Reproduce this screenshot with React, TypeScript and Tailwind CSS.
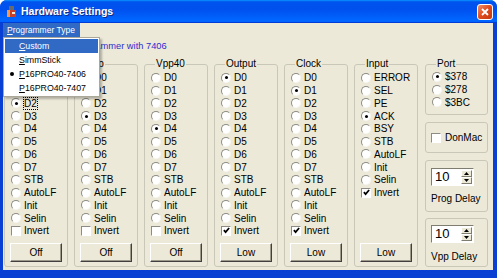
import React from 'react';

const BITS = ['D0', 'D1', 'D2', 'D3', 'D4', 'D5', 'D6', 'D7', 'STB', 'AutoLF', 'Init', 'Selin'];

const GROUPS = [
  { title: 'Vcc', on: 'D2', focus: true, invert: false, btn: 'Off' },
  { title: 'Vpp', on: 'D3', invert: false, btn: 'Off' },
  { title: 'Vpp40', on: 'D4', invert: false, btn: 'Off' },
  { title: 'Output', on: 'D0', invert: true, btn: 'Low' },
  { title: 'Clock', on: 'D1', invert: true, btn: 'Low' },
];

const INPUTS = ['ERROR', 'SEL', 'PE', 'ACK', 'BSY', 'STB', 'AutoLF', 'Init', 'Selin'];

function Radio({ label, on, focus }: { label: string; on?: boolean; focus?: boolean }) {
  return (
    <div className="flex items-center h-[12.75px]">
      <span className="w-[10px] h-[10px] shrink-0 rounded-full bg-white border border-t-[#8c8c84] border-l-[#8c8c84] border-r-[#f6f5f0] border-b-[#f6f5f0] flex items-center justify-center">
        {on && <span className="w-[3px] h-[3px] rounded-full bg-black" />}
      </span>
      <span className={`ml-[3px] text-[10px] leading-[11px] ${focus ? 'outline-1 outline-dotted outline-black' : ''}`}>
        {label}
      </span>
    </div>
  );
}

function Check({ on }: { on?: boolean }) {
  return (
    <span className="w-[10px] h-[10px] shrink-0 bg-white border border-t-[#8c8c84] border-l-[#8c8c84] border-r-white border-b-white flex items-center justify-center">
      {on && (
        <svg viewBox="0 0 8 8" className="w-[7px] h-[7px]">
          <path d="M1 3.5 L3 5.8 L7 1.2" stroke="#000" strokeWidth="2" fill="none" />
        </svg>
      )}
    </span>
  );
}

function CheckRow({ label, on }: { label: string; on?: boolean }) {
  return (
    <div className="flex items-center h-[12.75px]">
      <Check on={on} />
      <span className="ml-[3px] text-[10px] leading-[11px]">{label}</span>
    </div>
  );
}

function Button({ label }: { label: string }) {
  return (
    <div className="mt-auto mx-[5px] mb-[4px] h-[19px] flex items-center justify-center bg-[#ece9d8] border border-t-white border-l-white border-r-[#404040] border-b-[#404040] shadow-[inset_-1px_-1px_#9d9a8c] text-[10px]">
      {label}
    </div>
  );
}

function Spin({ value }: { value: string }) {
  return (
    <div className="w-[43px] h-[18px] bg-white border border-t-[#7f7d70] border-l-[#7f7d70] border-r-white border-b-white flex">
      <span className="flex-1 pl-[3px] text-[13px] leading-[16px]">{value}</span>
      <div className="w-[11px] mr-[1px] my-[1px] flex flex-col">
        <div className="flex-1 flex items-center justify-center bg-[#ece9d8] border border-t-white border-l-white border-r-[#7f7d70] border-b-[#7f7d70]">
          <svg viewBox="0 0 5 3" className="w-[5px] h-[3px]"><path d="M0 3 L2.5 0 L5 3 Z" fill="#000" /></svg>
        </div>
        <div className="flex-1 flex items-center justify-center bg-[#ece9d8] border border-t-white border-l-white border-r-[#7f7d70] border-b-[#7f7d70]">
          <svg viewBox="0 0 5 3" className="w-[5px] h-[3px]"><path d="M0 0 L2.5 3 L5 0 Z" fill="#000" /></svg>
        </div>
      </div>
    </div>
  );
}

export default function App() {
  return (
    <div className="w-[497px] h-[278px] bg-white font-['Liberation_Sans',Arial,sans-serif] text-black">
      <div className="relative w-full h-full flex flex-col bg-[#0a3fd4] rounded-t-[7px] overflow-hidden">
        {/* Title bar */}
        <div className="h-[23px] shrink-0 flex items-center pl-[5px] pr-[4px] bg-[linear-gradient(180deg,#0997ff,#0053ee_8%,#0050ee_40%,#06f_88%,#06f_93%,#005bff_95%,#003dd7_96%,#003dd7)]">
          <svg viewBox="0 0 13 13" className="w-[13px] h-[13px]">
            <path d="M4 1 L9 1 L9 5 L4 5 Z" fill="#6a6a6a" />
            <path d="M2 5 L11 5 L11 12 L2 12 Z" fill="#c8402a" />
            <path d="M2 5 L5 5 L5 12 L2 12 Z" fill="#f09a50" />
            <rect x="7" y="7" width="3" height="2" fill="#f4e8d0" />
          </svg>
          <span className="ml-[3px] text-[10.5px] font-bold text-white [text-shadow:1px_1px_#0a2a8a]">Hardware Settings</span>
          <div className="ml-auto w-[16px] h-[16px] rounded-[3px] border border-white bg-[linear-gradient(135deg,#f0906a,#e04a1c_50%,#c23a10)] flex items-center justify-center">
            <svg viewBox="0 0 8 8" className="w-[8px] h-[8px]">
              <path d="M1 1 L7 7 M7 1 L1 7" stroke="#fff" strokeWidth="1.8" />
            </svg>
          </div>
        </div>

        {/* Client area */}
        <div className="flex-1 ml-[3px] mr-[4px] mb-[8px] bg-[#ece9d8] flex flex-col">
          <div className="h-[14px] flex">
            <div className="w-[77px] bg-[#316ac5] text-white text-[8.5px] leading-[14px] pl-[4px]">
              <span className="underline">P</span>rogrammer Type
            </div>
          </div>
          <div className="h-[21px] pt-[3px] pl-[20px] text-[9.3px] leading-[12px] text-[#2c2cd0]">
            P16PRO40 Programmer with 7406
          </div>

          <div className="h-[209px] flex gap-[6px] pl-[1px]">
            {GROUPS.map(g => (
              <fieldset key={g.title} className="w-[64px] border border-[#c9c8b8] rounded-[3px] flex flex-col pl-[6px]">
                <legend className="ml-[4px] px-[1px] text-[10px] leading-[12px]">{g.title}</legend>
                <div className="pt-[1.6px] flex flex-col">
                  {BITS.map(b => (
                    <Radio key={b} label={b} on={g.on === b} focus={g.focus && g.on === b} />
                  ))}
                  <CheckRow label="Invert" on={g.invert} />
                </div>
                <div className="mt-auto -ml-[6px]">
                  <Button label={g.btn} />
                </div>
              </fieldset>
            ))}

            <fieldset className="w-[64px] border border-[#c9c8b8] rounded-[3px] flex flex-col pl-[6px]">
              <legend className="ml-[4px] px-[1px] text-[10px] leading-[12px]">Input</legend>
              <div className="pt-[1.6px] flex flex-col">
                {INPUTS.map(b => (
                  <Radio key={b} label={b} on={b === 'ACK'} />
                ))}
                <CheckRow label="Invert" on />
              </div>
              <div className="mt-auto -ml-[6px]">
                <Button label="Low" />
              </div>
            </fieldset>

            <div className="w-[63px] flex flex-col ml-[1px]">
              <fieldset className="h-[57px] border border-[#c9c8b8] rounded-[3px] flex flex-col pl-[6px]">
                <legend className="ml-[4px] px-[1px] text-[10px] leading-[12px]">Port</legend>
                <div className="pt-[0.6px] flex flex-col">
                  <Radio label="$378" on />
                  <Radio label="$278" />
                  <Radio label="$3BC" />
                </div>
              </fieldset>
              <div className="mt-[7px] h-[31px] border border-[#c9c8b8] rounded-[3px] flex items-center pl-[5px]">
                <Check />
                <span className="ml-[4px] text-[10px] leading-[11px]">DonMac</span>
              </div>
              <div className="mt-[7px] h-[52px] border border-[#c9c8b8] rounded-[3px] pt-[7px] pl-[5px] flex flex-col">
                <Spin value="10" />
                <span className="mt-[7px] text-[10px] leading-[12px]">Prog Delay</span>
              </div>
              <div className="mt-[6px] flex-1 border border-[#c9c8b8] rounded-[3px] pt-[6px] pl-[5px] flex flex-col">
                <Spin value="10" />
                <span className="mt-[8px] text-[10px] leading-[12px]">Vpp Delay</span>
              </div>
            </div>
          </div>
        </div>

        {/* Programmer Type dropdown */}
        <div className="absolute left-[3px] top-[37px] w-[97px] h-[60px] bg-white border border-[#aca899] shadow-[2px_2px_2px_rgba(0,0,0,0.25)] pt-[1px] px-[1px] text-[8.8px]">
          <div className="h-[14px] bg-[#316ac5] text-white leading-[14px] pl-[14px]">
            <span className="underline">C</span>ustom
          </div>
          <div className="h-[14px] leading-[14px] pl-[14px]">
            <span className="underline">S</span>immStick
          </div>
          <div className="relative h-[14px] leading-[14px] pl-[14px] flex items-center">
            <span className="absolute left-[5px] w-[4px] h-[4px] rounded-full bg-black" />
            <span><span className="underline">P</span>16PRO40-7406</span>
          </div>
          <div className="h-[14px] leading-[14px] pl-[14px]">
            <span className="underline">P</span>16PRO40-7407
          </div>
        </div>
      </div>
    </div>
  );
}
